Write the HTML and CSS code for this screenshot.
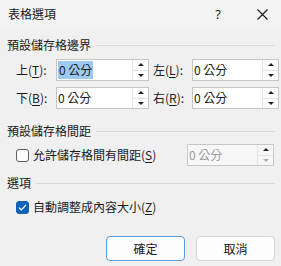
FILE: index.html
```html
<!DOCTYPE html>
<html lang="zh-Hant">
<head>
<meta charset="utf-8">
<link rel="stylesheet" href="styles.css">
</head>
<body>
<div class="dialog">
  <div class="titlebar">
    <span class="title">表格選項</span>
    <span class="help">?</span>
    <span class="close"><svg width="11" height="11" viewBox="0 0 11 11"><path d="M0.5 0.5L10.5 10.5M10.5 0.5L0.5 10.5" stroke="#1a1a1a" stroke-width="1.1"/></svg></span>
  </div>
  <div class="body">
    <div class="group-title"><span>預設儲存格邊界</span></div>
    <div class="margins">
      <span class="lbl">上(<u>T</u>):</span>
      <div class="spin"><div class="val"><span class="sel">0 公分</span></div><div class="arrows"><span class="up"></span><span class="down"></span></div></div>
      <span class="lbl lbl2">左(<u>L</u>):</span>
      <div class="spin"><div class="val">0 公分</div><div class="arrows"><span class="up"></span><span class="down"></span></div></div>
      <span class="lbl">下(<u>B</u>):</span>
      <div class="spin"><div class="val">0 公分</div><div class="arrows"><span class="up"></span><span class="down"></span></div></div>
      <span class="lbl lbl2">右(<u>R</u>):</span>
      <div class="spin"><div class="val">0 公分</div><div class="arrows"><span class="up"></span><span class="down"></span></div></div>
    </div>
    <div class="group-title"><span>預設儲存格間距</span></div>
    <div class="spacing-row">
      <span class="check"><span class="box"></span>允許儲存格間有間距(<u>S</u>)</span>
      <div class="spin disabled"><div class="val">0 公分</div><div class="arrows"><span class="up"></span><span class="down"></span></div></div>
    </div>
    <div class="group-title"><span>選項</span></div>
    <div class="check-row">
      <span class="check"><span class="box checked"><svg width="9" height="7" viewBox="0 0 9 7"><path d="M1 3.6L3.3 5.8L8 1" fill="none" stroke="#fff" stroke-width="1.2"/></svg></span>自動調整成內容大小(<u>Z</u>)</span>
    </div>
    <div class="buttons">
      <span class="btn default">確定</span>
      <span class="btn">取消</span>
    </div>
  </div>
</div>
</body>
</html>
```
FILE: styles.css
```css
html, body {
  margin: 0;
  padding: 0;
}
body {
  width: 281px;
  height: 266px;
  background: #f0f0f0;
  font-family: "Noto Sans CJK TC", "Noto Sans", sans-serif;
  font-size: 12px;
  color: #1a1a1a;
  overflow: hidden;
}
.dialog {
  width: 281px;
  height: 266px;
  display: flex;
  flex-direction: column;
}
.titlebar {
  height: 28px;
  display: flex;
  align-items: center;
  padding-left: 8px;
  background: #f3f3f3;
  flex: none;
}
.title {
  flex: 1;
  line-height: 16px;
  font-size: 12px;
}
.help {
  width: 20px;
  text-align: center;
  margin-right: 29px;
  font-family: "Noto Sans", sans-serif;
  font-size: 13px;
}
.close {
  width: 11px;
  margin-right: 13px;
  display: flex;
}
.body {
  flex: 1;
  padding: 9px 6px 0 7px;
  display: flex;
  flex-direction: column;
}
.group-title {
  display: flex;
  align-items: center;
  gap: 5px;
  line-height: 16px;
  height: 16px;
}
.group-title::after {
  content: "";
  flex: 1;
  height: 1px;
  background: #dadada;
}
.margins {
  display: grid;
  grid-template-columns: 40px 93px 43px 87px;
  grid-auto-rows: 22px;
  row-gap: 6px;
  margin-top: 6px;
  margin-bottom: 14px;
  padding-left: 9px;
  align-items: center;
}
.lbl {
  line-height: 16px;
}
.lbl2 {
  padding-left: 4px;
}
u {
  text-decoration-thickness: 1px;
  text-underline-offset: 2px;
}
.spin {
  display: flex;
  height: 22px;
  box-sizing: border-box;
  border: 1px solid #c6c6c6;
  background: #fff;
}
.val {
  flex: 1;
  display: flex;
  align-items: center;
  padding: 1px 0 1px 1px;
  line-height: 16px;
}
.sel {
  background: #9dcaf1;
  height: 18px;
  display: flex;
  align-items: center;
  padding: 0 1px;
}
.arrows {
  width: 15px;
  display: flex;
  flex-direction: column;
  border-left: 1px solid #e3e3e3;
}
.arrows span {
  flex: 1;
  display: flex;
  align-items: center;
  justify-content: center;
}
.arrows .up {
  border-bottom: 1px solid #e3e3e3;
}
.arrows .up::before {
  content: "";
  border-left: 3px solid transparent;
  border-right: 3px solid transparent;
  border-bottom: 3px solid #222;
}
.arrows .down::before {
  content: "";
  border-left: 3px solid transparent;
  border-right: 3px solid transparent;
  border-top: 3px solid #222;
}
.spin.disabled {
  width: 87px;
  background: #f7f7f7;
  color: #9a9a9a;
  border-color: #c8c8c8;
}
.spin.disabled .down::before {
  border-top-color: #aaa;
}
.spacing-row {
  display: flex;
  align-items: center;
  justify-content: space-between;
  margin-top: 5px;
  margin-bottom: 9px;
  padding-left: 9px;
  padding-right: 1px;
}
.check {
  display: flex;
  align-items: center;
  line-height: 16px;
}
.box {
  width: 13px;
  height: 13px;
  box-sizing: border-box;
  border: 1px solid #5e5e5e;
  border-radius: 3px;
  margin-right: 4px;
  background: #fbfbfb;
  display: flex;
  align-items: center;
  justify-content: center;
}
.box.checked {
  background: #0f62b8;
  border-color: #0f62b8;
}
.check-row {
  display: flex;
  margin-top: 8px;
  padding-left: 9px;
}
.buttons {
  display: flex;
  justify-content: flex-end;
  gap: 11px;
  margin-top: 21px;
  padding-right: 0;
}
.btn {
  width: 79px;
  height: 25px;
  box-sizing: border-box;
  border: 1px solid #d3d3d3;
  border-radius: 4px;
  background: #fdfdfd;
  display: flex;
  align-items: center;
  justify-content: center;
  line-height: 16px;
}
.btn.default {
  border-color: #5a9ee0;
}
```
